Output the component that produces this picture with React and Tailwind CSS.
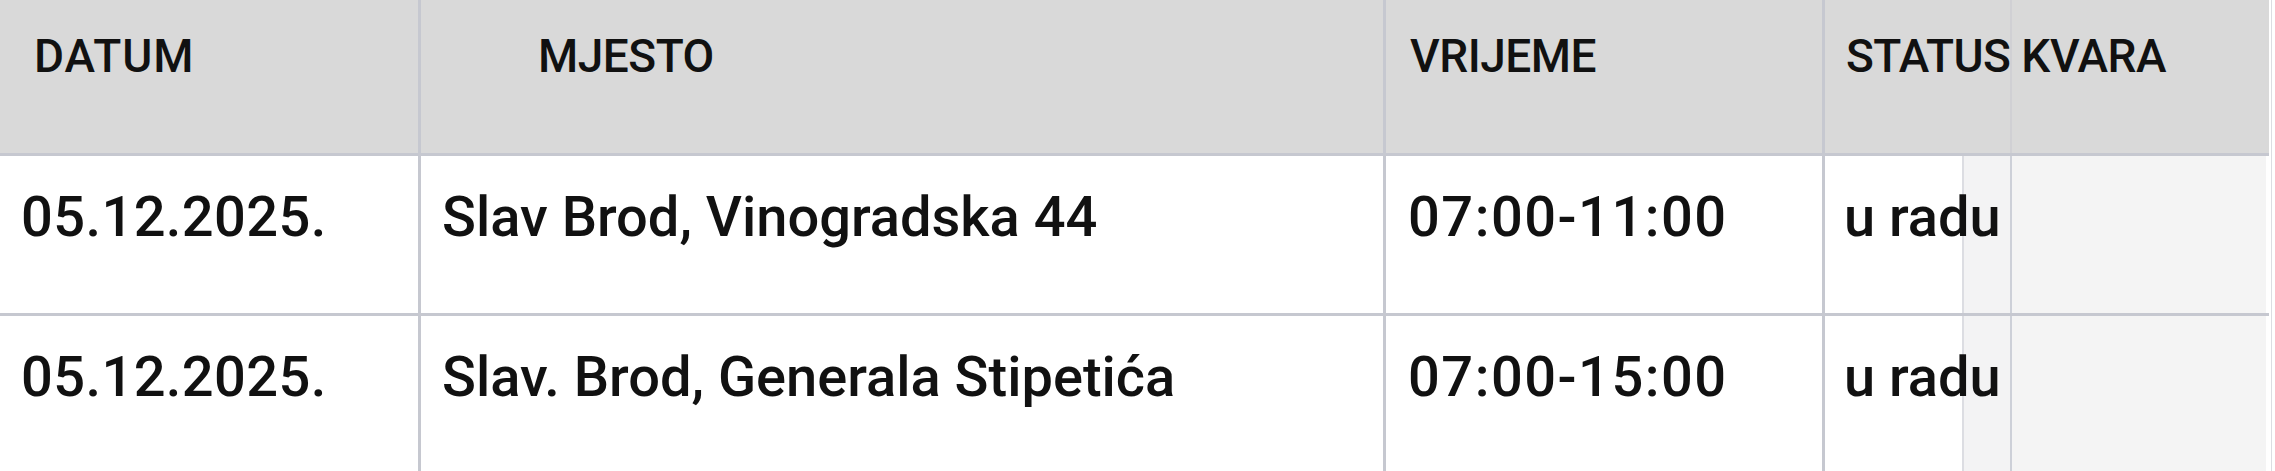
const rows = [
  { datum: "05.12.2025.", mjesto: "Slav Brod, Vinogradska 44", vrijeme: "07:00-11:00", status: "u radu" },
  { datum: "05.12.2025.", mjesto: "Slav. Brod, Generala Stipetića", vrijeme: "07:00-15:00", status: "u radu" },
];

const font = { fontFamily: 'Roboto, "Liberation Sans", Arial, sans-serif' };

function StatusCell({ header, children }) {
  // stupac je djelomicno prekriven sivim trakama (kao na ekranu), tekst ide preko njih
  return (
    <div className="w-[441px] shrink-0 border-r-[3px] border-[#c6c8d0] grid grid-cols-[137px_2px_46px_2px_254px]">
      {header ? (
        <>
          <div className="row-start-1 col-start-1 col-span-3 bg-[#d9d9d9]" />
          <div className="row-start-1 col-start-4 bg-[#d0d0d4]" />
          <div className="row-start-1 col-start-5 bg-[#d9d9d9]" />
        </>
      ) : (
        <>
          <div className="row-start-1 col-start-1 bg-white" />
          <div className="row-start-1 col-start-2 bg-[#dcdde2]" />
          <div className="row-start-1 col-start-3 bg-[#f3f3f4]" />
          <div className="row-start-1 col-start-4 bg-[#cdd0d8]" />
          <div className="row-start-1 col-start-5 bg-[#f4f4f4]" />
        </>
      )}
      <div className="row-start-1 col-start-1 col-span-5 relative z-10">{children}</div>
    </div>
  );
}

export default function App() {
  return (
    <div className="w-[2275px] h-[471px] overflow-hidden bg-white text-[#111] font-medium" style={font}>
      <div className="flex">
        <div className="w-[2269px] shrink-0">
          {/* zaglavlje */}
          <div className="flex h-[156px] border-b-[3px] border-[#c6c8d0] bg-[#d9d9d9] text-[46px] leading-[52px] tracking-[-0.5px]">
            <div className="w-[421px] shrink-0 border-r-[3px] border-[#c6c8d0] pl-[34px] pt-[30px] tracking-[1px]">DATUM</div>
            <div className="w-[965px] shrink-0 border-r-[3px] border-[#c6c8d0] pl-[117px] pt-[30px]">MJESTO</div>
            <div className="w-[439px] shrink-0 border-r-[3px] border-[#c6c8d0] pl-[24px] pt-[30px]">VRIJEME</div>
            <StatusCell header>
              <div className="pl-[21px] pt-[30px] whitespace-nowrap">STATUS KVARA</div>
            </StatusCell>
          </div>

          {rows.map((r, i) => (
            <div
              key={i}
              className="flex h-[160px] border-b-[3px] border-[#c6c8d0] text-[56px] leading-[66px]"
            >
              <div className="w-[421px] shrink-0 border-r-[3px] border-[#c6c8d0] pl-[21px] pt-[28px] tracking-[0.4px]">{r.datum}</div>
              <div className="w-[965px] shrink-0 border-r-[3px] border-[#c6c8d0] pl-[21px] pt-[28px] whitespace-nowrap">{r.mjesto}</div>
              <div className="w-[439px] shrink-0 border-r-[3px] border-[#c6c8d0] pl-[22px] pt-[28px] tracking-[1.5px]">{r.vrijeme}</div>
              <StatusCell>
                <div className="pl-[19px] pt-[28px]">{r.status}</div>
              </StatusCell>
            </div>
          ))}
        </div>
        <div className="flex-1 flex pl-[2px]">
          <div className="w-px bg-[#dcdde2]" />
        </div>
      </div>
    </div>
  );
}
